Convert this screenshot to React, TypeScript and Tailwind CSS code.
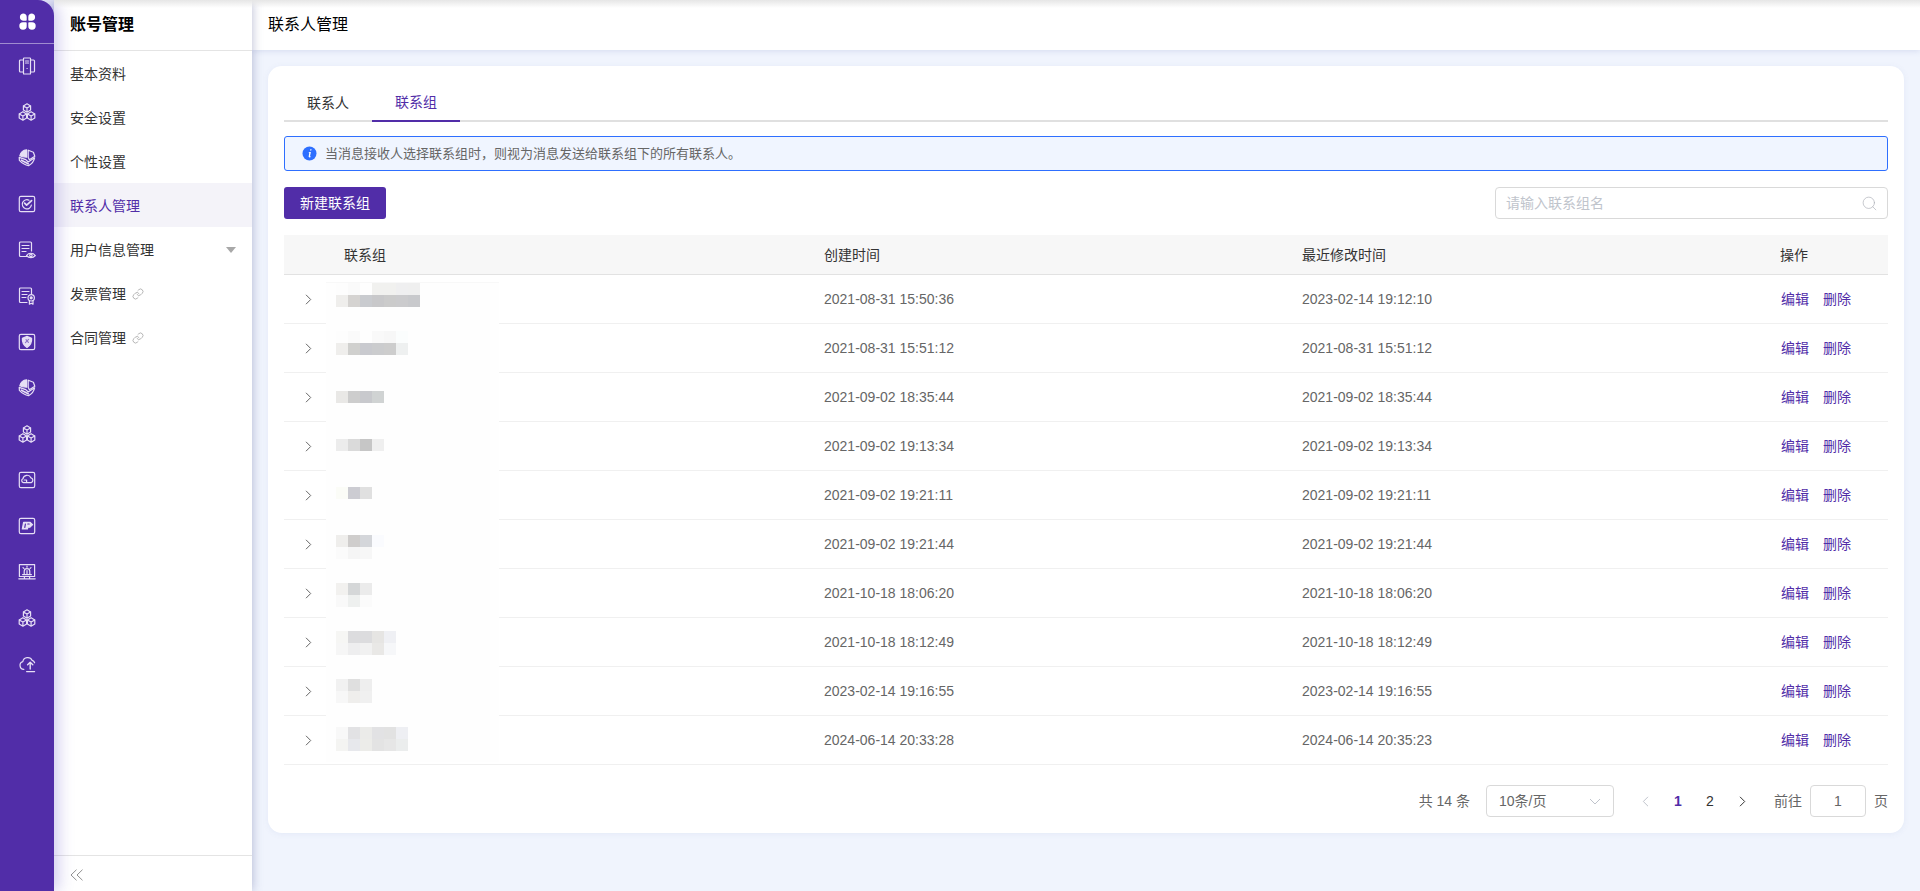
import React from 'react';
import { Link, Search } from 'lucide-react';

const sideItems = [
  { label: '基本资料' },
  { label: '安全设置' },
  { label: '个性设置' },
  { label: '联系人管理', active: true },
  { label: '用户信息管理', arrow: true },
  { label: '发票管理', link: true },
  { label: '合同管理', link: true },
];

const groups = [
  ['2021-08-31 15:50:36', '2023-02-14 19:12:10'],
  ['2021-08-31 15:51:12', '2021-08-31 15:51:12'],
  ['2021-09-02 18:35:44', '2021-09-02 18:35:44'],
  ['2021-09-02 19:13:34', '2021-09-02 19:13:34'],
  ['2021-09-02 19:21:11', '2021-09-02 19:21:11'],
  ['2021-09-02 19:21:44', '2021-09-02 19:21:44'],
  ['2021-10-18 18:06:20', '2021-10-18 18:06:20'],
  ['2021-10-18 18:12:49', '2021-10-18 18:12:49'],
  ['2023-02-14 19:16:55', '2023-02-14 19:16:55'],
  ['2024-06-14 20:33:28', '2024-06-14 20:35:23'],
];

// blurred names: page y of the first strip, then 12px cells per strip
const mosaics: { y: number; strips: string[][] }[] = [
  { y: 283, strips: [['#fdfdfd', '#fafafa', '#fefefe', '#f1f1ef', '#f1f1ef', '#efeff0', '#efefef'], ['#efeeec', '#d5d3d1', '#c9cbcf', '#c8c8ca', '#cbcbcb', '#cbcbcd', '#c8c9cc']] },
  { y: 331, strips: [['#fdfdfd', '#fafafa', '#fefefe', '#f9f9f9', '#f7f7f7', '#fbfdfd'], ['#efeeec', '#d0d0ce', '#c9cacf', '#cbccce', '#cdcdcd', '#eef0f0']] },
  { y: 391, strips: [['#e9e8e6', '#cdcdcd', '#c8c9cd', '#d0d3d3']] },
  { y: 439, strips: [['#ececec', '#dadada', '#c6c6c6', '#efefef']] },
  { y: 487, strips: [['#fbfcf7', '#ccccd2', '#e0e0e0']] },
  { y: 535, strips: [['#efeeec', '#cfcdcc', '#d4d6da', '#fafbfe'], ['#fbfbfb', '#f5f5f5', '#f7f7f7']] },
  { y: 583, strips: [['#f2f1ef', '#d5d7d8', '#ebebeb'], ['#f9f9f9', '#eef0ef', '#fbfbfb']] },
  { y: 631, strips: [['#f6f6f4', '#dcdcde', '#dcdcde', '#e6e5e3', '#eff0f4'], ['#f6f6f6', '#eeeeef', '#f1f1f1', '#e9e8e6', '#f6f7f9']] },
  { y: 679, strips: [['#f1f1f1', '#dfdfdf', '#eeeeee'], ['#f7f7f7', '#efeeec', '#f0f0f0']] },
  { y: 727, strips: [['#f8f8f8', '#e2e2e4', '#ebebe9', '#e2e2e4', '#e2e2e2', '#eeeff3'], ['#f4f4f2', '#e7e8ec', '#ecece9', '#e3e3e3', '#e6e6e6', '#ebeded']] },
];

function RailSvg({ children }: { children: React.ReactNode }) {
  return (
    <svg width="18" height="18" viewBox="0 0 18 18" fill="none" stroke="#e6dff5" strokeWidth="1.2" strokeLinejoin="round" strokeLinecap="round">
      {children}
    </svg>
  );
}

const Server = () => (
  <RailSvg>
    <rect x="5.5" y="1" width="7" height="16" rx="0.6" />
    <path d="M5.5 3H2.5a1 1 0 0 0-1 1v10a1 1 0 0 0 1 1h3M12.5 3h3a1 1 0 0 1 1 1v10a1 1 0 0 1-1 1h-3" />
    <path d="M7.5 4h3M7.5 6h3M9 11.5h.2" />
  </RailSvg>
);

const Cubes = () => (
  <RailSvg>
    <path d="M9 .8l3.6 2.100v4.200L9 9.200 5.400 7.100V2.900zM5.400 2.900L9 5l3.600-2.100M9 5v4.200" />
    <path d="M4.900 8.700l3.700 2.200v4.100l-3.700 2.200L1.200 15v-4.100zM1.200 10.900l3.700 2.100 3.700-2.100M4.900 13v4.200" />
    <path d="M13.100 8.700l3.700 2.200v4.100l-3.700 2.200L9.400 15v-4.100zM9.400 10.900l3.700 2.100 3.700-2.100M13.100 13v4.200" />
  </RailSvg>
);

const BoxShield = () => (
  <RailSvg>
    <path d="M1.800 6.800C2.400 3.600 5.200 1 8.600.8v7.400L4.400 7.600z" fill="#e6dff5" />
    <path d="M10.200 1.200l5.200 2.100 1.400 4-5.400 3.400-1.200-2.200z" />
    <path d="M1.200 8.400l6.600 2.200 2.400 2.400 6.400-4.200c-.6 3.200-3.100 6.200-6 7.800-3.600-.6-7-2.800-9.200-5.200z" />
    <path d="M3.400 11.200l6.800 3.600" strokeWidth="1.600" />
  </RailSvg>
);

const CheckBox = () => (
  <RailSvg>
    <rect x="1.300" y="1.300" width="15.400" height="15.400" rx="1.600" />
    <path d="M11 5.200A4.600 4.600 0 1 0 13.400 10" />
    <path d="M6.600 8.200l2 2 5-4.600" strokeWidth="1.700" />
  </RailSvg>
);

const DocEye = () => (
  <RailSvg>
    <path d="M9 15.500H2.500a1 1 0 0 1-1-1V2a1 1 0 0 1 1-1h10a1 1 0 0 1 1 1v8" />
    <path d="M4 4.500h7M4 7.500h7M4 10.500h4" />
    <path d="M8.500 14.500c2.400-3 6.400-3 8.800 0-2.400 2.800-6.400 2.800-8.800 0z" />
    <circle cx="12.900" cy="14.400" r="1.200" />
  </RailSvg>
);

const DocBadge = () => (
  <RailSvg>
    <path d="M9 15.500H2.500a1 1 0 0 1-1-1V2a1 1 0 0 1 1-1h10a1 1 0 0 1 1 1v5" />
    <path d="M4 4.500h7M4 7.500h5M4 10.500h4" />
    <circle cx="13.200" cy="10.800" r="3.200" />
    <circle cx="13.200" cy="10.800" r="1" fill="#e6dff5" />
    <path d="M11.400 13.600v3.600l1.800-1 1.800 1v-3.600" />
  </RailSvg>
);

const ShieldBox = () => (
  <RailSvg>
    <rect x="1.300" y="1.300" width="15.400" height="15.400" rx="1.600" />
    <path d="M9 3.400l4.600 1.800c.3 3.600-1.200 7-4.600 9.200-3.400-2.200-4.900-5.600-4.600-9.200z" fill="#e6dff5" />
    <path d="M7.400 9.600l3.200-3.200M8 6.600l2.400 2.800" stroke="#8f78c8" />
  </RailSvg>
);

const CloudBox = () => (
  <RailSvg>
    <rect x="1.300" y="1.300" width="15.400" height="15.400" rx="1.600" />
    <path d="M5.400 11.600a2 2 0 0 1-.5-3.800 4.200 4.200 0 0 1 8-1 2.500 2.500 0 0 1 .3 4.800z" />
    <path d="M6.200 9h2.400v2.400" />
  </RailSvg>
);

const TagBox = () => (
  <RailSvg>
    <rect x="1.300" y="1.300" width="15.400" height="15.400" rx="1.600" />
    <path d="M5.600 5.400h6.600l2.400 2.200-2.600 2.600H9.800l-.3 1.800H4.300z" fill="#e6dff5" />
    <path d="M7.400 7l-.6 3.400M9.800 7h1.400" stroke="#512da8" />
  </RailSvg>
);

const AlarmScreen = () => (
  <RailSvg>
    <path d="M1.400 13.500V1.600h15.200v11.900M.8 15.800h16.400M6.400 13.500v2.300M11.600 13.500v2.300M1.400 13.500h15.200" />
    <path d="M6.200 11.600V8.400a2.800 2.800 0 0 1 5.600 0v3.200M4.600 11.600h8.800M9 3v1.200M5 4.600l.8.800M13 4.600l-.8.800M9 7.600v4" />
  </RailSvg>
);

const CloudUp = () => (
  <RailSvg>
    <path d="M5.800 14.400A4 4 0 0 1 4.800 6.600a5 5 0 0 1 9.400-1.200c1.200.4 2 1.200 2.400 2.400" />
    <path d="M12.200 14V7.400M9.600 9.800l2.600-2.600 2.600 2.600" strokeWidth="1.400" />
    <path d="M8.600 16.600h8" strokeWidth="1.200" />
  </RailSvg>
);

const railIcons = [Server, Cubes, BoxShield, CheckBox, DocEye, DocBadge, ShieldBox, BoxShield, Cubes, CloudBox, TagBox, AlarmScreen, Cubes, CloudUp];

function Chevron({ dir = 'right', color = '#666666' }: { dir?: 'left' | 'right'; color?: string }) {
  return (
    <svg width="7" height="11" viewBox="0 0 7 11" fill="none" stroke={color} strokeWidth="1">
      <path d={dir === 'right' ? 'M1 .8l4.700 4.700L1 10.200' : 'M6 .8L1.300 5.500 6 10.200'} />
    </svg>
  );
}

function Rail() {
  return (
    <aside className="relative z-30 flex w-[54px] shrink-0 flex-col rounded-tr-[16px] bg-[#512da8] shadow-[4px_0_16px_rgba(80,60,190,0.28)]">
      <div className="flex h-[44px] shrink-0 items-center justify-center border-b border-[#a08cd0]">
        <svg width="17" height="17" viewBox="0 0 17 17" fill="#ffffff">
          <path d="M4 .4a3.700 3.700 0 0 1 3.700 3.700v2.600c0 .6-.4 1-1 1H4A3.700 3.700 0 0 1 4 .4zM13 .4a3.700 3.700 0 0 1 0 7.300h-2.700c-.6 0-1-.4-1-1V4.100A3.700 3.700 0 0 1 13 .4zM4 9.300h2.700c.6 0 1 .4 1 1v2.600A3.700 3.700 0 1 1 4 9.300zM10.300 9.300H13a3.700 3.700 0 1 1-3.700 3.600v-2.600c0-.6.400-1 1-1z" />
        </svg>
      </div>
      <div className="-mt-px flex flex-col">
        {railIcons.map((Icon, i) => (
          <div key={i} className="flex h-[46px] items-center justify-center">
            <Icon />
          </div>
        ))}
      </div>
    </aside>
  );
}

function Sidebar() {
  return (
    <nav className="relative z-20 flex w-[198px] shrink-0 flex-col bg-white shadow-[0_0_10px_rgba(70,80,140,0.38)]">
      <div className="flex h-[51px] shrink-0 items-center border-b border-[#e4e4e4] pl-4 text-base font-semibold text-black">账号管理</div>
      <div className="flex-1">
        {sideItems.map((item) => (
          <div
            key={item.label}
            className={`flex h-[44px] items-center pl-4 pr-[16px] pt-[2px] text-sm ${item.active ? 'bg-[#f4f3f9] text-[#512da8]' : 'text-[#333333]'}`}
          >
            <span>{item.label}</span>
            {item.link && <Link size={12} strokeWidth={1.5} className="ml-[6px] text-[#a0a0a0]" />}
            {item.arrow && (
              <svg width="10" height="6" viewBox="0 0 10 6" className="ml-auto" fill="#a8a8a8">
                <path d="M0 0h10L5 6z" />
              </svg>
            )}
          </div>
        ))}
      </div>
      <div className="flex h-[36px] shrink-0 items-center border-t border-[#e4e4e4] pl-4 pt-[3px]">
        <svg width="14" height="12" viewBox="0 0 14 12" fill="none" stroke="#909090" strokeWidth="1">
          <path d="M6.500.7L1 6l5.500 5.300M12.500.7L7 6l5.500 5.300" />
        </svg>
      </div>
    </nav>
  );
}

function GroupTable() {
  return (
    <div className="relative mt-4">
      <div className="grid h-[40px] grid-cols-[60px_480px_478px_478px_1fr] items-center border-b border-[#e2e2e2] bg-[#f7f7f7] text-sm text-[#333333]">
        <div />
        <div>联系组</div>
        <div>创建时间</div>
        <div>最近修改时间</div>
        <div>操作</div>
      </div>
      {groups.map((g, i) => (
        <div key={i} className="grid h-[49px] grid-cols-[60px_480px_478px_478px_1fr] items-center border-b border-[#f0f0f0] text-sm text-[#666666]">
          <div className="pl-[21px]">
            <Chevron />
          </div>
          <div />
          <div>{g[0]}</div>
          <div>{g[1]}</div>
          <div className="flex gap-[14px] pl-px text-[#512da8]">
            <span>编辑</span>
            <span>删除</span>
          </div>
        </div>
      ))}
      {/* name column is masked in the screenshot */}
      <div className="absolute left-[42px] top-[47px] h-[480px] w-[173px] border-t border-[#f8f8f8] bg-[#fefefe]">
        {mosaics.map((m) => (
          <div key={m.y} className="absolute left-[10px] flex flex-col" style={{ top: m.y - 283 }}>
            {m.strips.map((strip, s) => (
              <div key={s} className="flex">
                {strip.map((c, n) => (
                  <div key={n} className="h-3 w-3" style={{ backgroundColor: c }} />
                ))}
              </div>
            ))}
          </div>
        ))}
      </div>
    </div>
  );
}

function Pager() {
  return (
    <div className="mt-5 flex h-8 items-center justify-end text-sm text-[#666666]">
      <span>共 14 条</span>
      <div className="ml-4 flex h-8 w-[128px] items-center justify-between rounded border border-[#d9d9d9] pl-3 pr-[12px]">
        <span>10条/页</span>
        <svg width="12" height="7" viewBox="0 0 12 7" fill="none" stroke="#c0c4cc" strokeWidth="1">
          <path d="M1 1l5 5 5-5" />
        </svg>
      </div>
      <div className="ml-[24px] flex w-[14px] justify-center">
        <Chevron dir="left" color="#c0c4cc" />
      </div>
      <span className="ml-[22px] w-[8px] font-bold text-[#512da8]">1</span>
      <span className="ml-[24px] w-[8px] text-[#333333]">2</span>
      <div className="ml-[21px] flex w-[14px] justify-center">
        <Chevron color="#333333" />
      </div>
      <span className="ml-[25px]">前往</span>
      <div className="ml-2 flex h-8 w-[56px] items-center justify-center rounded border border-[#d9d9d9]">1</div>
      <span className="ml-2">页</span>
    </div>
  );
}

export default function App() {
  return (
    <div className="relative flex h-[891px] overflow-hidden bg-[#f0f4fd] font-['Liberation_Sans','Noto_Sans_CJK_SC',sans-serif]">
      <Rail />
      <Sidebar />
      <main className="flex min-w-0 flex-1 flex-col">
        <header className="flex h-[50px] shrink-0 items-center bg-white pl-4 text-base text-black shadow-[0_1px_6px_rgba(90,110,180,0.18)]">
          联系人管理
        </header>
        <div className="p-4">
          <section className="rounded-[14px] bg-white px-4 pb-4 pt-[18px] shadow-[0_1px_6px_rgba(90,110,180,0.08)]">
            <div className="flex h-[38px] border-b-2 border-[#e0e0e0] text-sm">
              <div className="flex h-[38px] w-[88px] items-center justify-center text-[#333333]">联系人</div>
              <div className="flex h-[38px] w-[88px] items-center justify-center border-b-2 border-[#512da8] text-[#512da8]">联系组</div>
            </div>
            <div className="mt-[14px] flex h-[35px] items-center rounded-[3px] border border-[#2e6fff] bg-[#f0f5ff] pl-[17px] text-[13px] text-[#666666]">
              <svg width="15" height="15" viewBox="0 0 15 15">
                <circle cx="7.500" cy="7.500" r="7" fill="#2e6fff" />
                <path d="M8.300 3.200h1.300l-.3 1.400H8zM7.600 6h1.300L8 10.200c-.1.400.3.400.9.100l-.1.800c-1.200.600-2.400.400-2.100-.800l.6-3.500-.6.100.1-.7z" fill="#ffffff" />
              </svg>
              <span className="ml-2">当消息接收人选择联系组时，则视为消息发送给联系组下的所有联系人。</span>
            </div>
            <div className="mt-4 flex h-8 items-center justify-between">
              <button className="h-8 rounded-[3px] bg-[#512da8] px-4 text-sm text-white">新建联系组</button>
              <div className="flex h-8 w-[393px] items-center justify-between rounded border border-[#d9d9d9] pl-[10px] pr-[9px] text-sm text-[#c0c4cc]">
                <span>请输入联系组名</span>
                <Search size={17} strokeWidth={0.9} className="text-[#a8acb4]" />
              </div>
            </div>
            <GroupTable />
            <Pager />
          </section>
        </div>
      </main>
      {/* soft shadow along the top edge */}
      <div className="pointer-events-none absolute left-[54px] right-0 top-0 z-40 h-2 bg-gradient-to-b from-[#e6e6e6] to-transparent" />
    </div>
  );
}
